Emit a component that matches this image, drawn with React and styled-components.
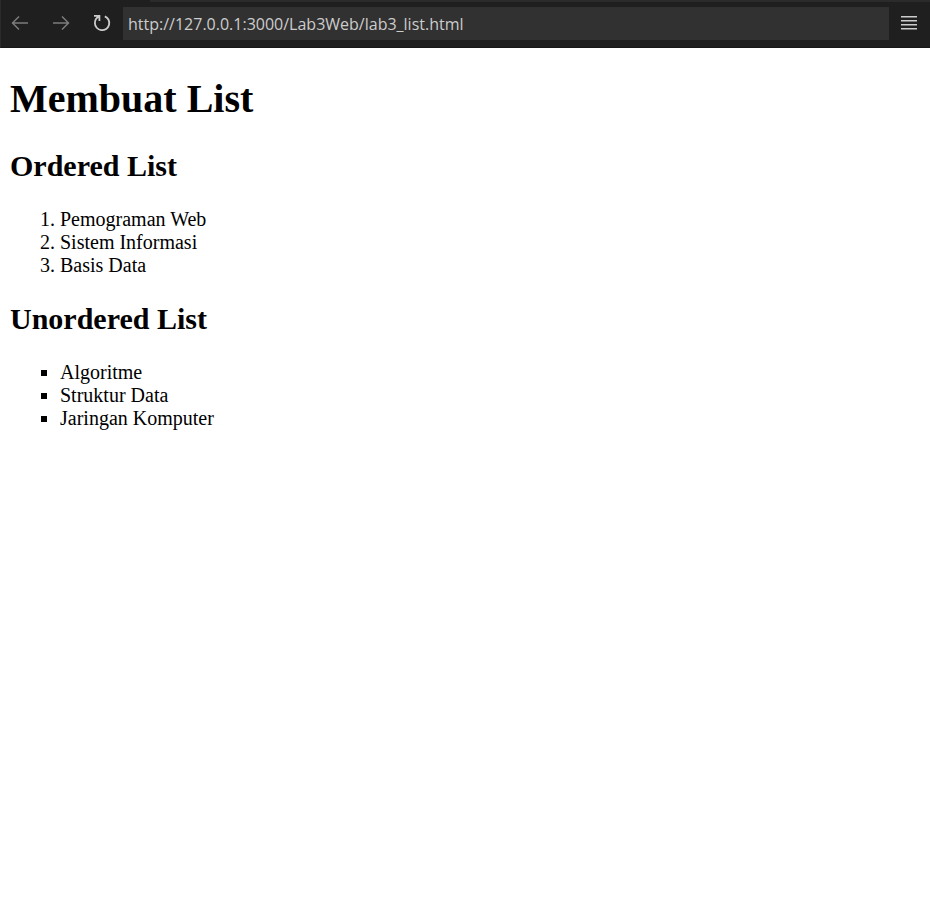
import React from "react";
import styled, { createGlobalStyle } from "styled-components";

const GlobalStyle = createGlobalStyle`
  *, *::before { box-sizing: border-box; }
  body {
    margin: 0;
    background: #fff;
    color: #000;
    font-family: "Liberation Serif", "Times New Roman", serif;
  }
`;

const Toolbar = styled.header`
  display: flex;
  align-items: center;
  height: 48px;
  padding: 0 1px 1px 0;
  background: linear-gradient(#2b2b2b, #2b2b2b) 149px 0 / 100% 2px no-repeat #1f1f1f;
  border-left: 1px solid #2b2b2b;
  border-bottom: 1px solid #181818;
`;

const IconButton = styled.button`
  display: flex;
  flex: none;
  align-items: center;
  justify-content: center;
  width: ${(p) => (p.$wide ? "40px" : "38px")};
  height: 33px;
  padding: 0;
  border: 0;
  background: transparent;
  color: ${(p) => (p.$dim ? "#7c7c7c" : "#cccccc")};
`;

const Navigation = styled.nav`
  display: flex;
  flex: none;
  gap: 3px;
  margin-right: 2px;
`;

const AddressInput = styled.input`
  flex: 1;
  min-width: 0;
  height: 33px;
  padding: 2px 5px 0;
  border: 0;
  outline: 0;
  background: #313131;
  color: #cccccc;
  font: 16px "Open Sans", sans-serif;
`;

const Page = styled.main`
  padding: 0 10px;
`;

const Title = styled.h1`
  margin: 28px 0 27px;
  font-size: 40px;
  line-height: 46px;
`;

const Subtitle = styled.h2`
  margin: 25px 0;
  font-size: 30px;
  line-height: 34px;
`;

const listStyles = `
  margin: 25px 0 24px;
  padding-left: 50px;
  font-size: 20px;
  line-height: 23px;
`;

const OrderedList = styled.ol`
  ${listStyles}
`;

const UnorderedList = styled.ul`
  ${listStyles}
  list-style-type: square;
`;

const ordered = ["Pemograman Web", "Sistem Informasi", "Basis Data"];
const unordered = ["Algoritme", "Struktur Data", "Jaringan Komputer"];

const BackIcon = () => (
  <svg width="18" height="16" viewBox="0 0 18 16" fill="none" stroke="currentColor" strokeWidth="1.5" aria-hidden="true">
    <path d="M17 8H1.5M8 1.5L1.5 8L8 14.5" />
  </svg>
);

const ForwardIcon = () => (
  <svg width="18" height="16" viewBox="0 0 18 16" fill="none" stroke="currentColor" strokeWidth="1.5" aria-hidden="true">
    <path d="M1 8H16.5M10 1.5L16.5 8L10 14.5" />
  </svg>
);

const ReloadIcon = () => (
  <svg width="18" height="18" viewBox="0 0 18 18" fill="none" stroke="currentColor" strokeWidth="1.8" aria-hidden="true">
    <path d="M1 1.9H6.4V7M6.2 2.4C3.4 3.6 1.9 6 1.9 9A7.2 7.2 0 1 0 11.8 2.3" />
  </svg>
);

const MenuIcon = () => (
  <svg width="16" height="14" viewBox="0 0 16 14" fill="currentColor" aria-hidden="true">
    <path d="M0 0h16v1.5H0zM0 4h16v1.5H0zM0 8h16v1.5H0zM0 12h16v1.5H0z" />
  </svg>
);

export default function App() {
  return (
    <>
      <GlobalStyle />
      <Toolbar>
        <Navigation aria-label="History">
          <IconButton $dim aria-label="Back"><BackIcon /></IconButton>
          <IconButton $dim aria-label="Forward"><ForwardIcon /></IconButton>
          <IconButton aria-label="Reload"><ReloadIcon /></IconButton>
        </Navigation>
        <AddressInput
          type="text"
          aria-label="Address"
          spellCheck={false}
          defaultValue="http://127.0.0.1:3000/Lab3Web/lab3_list.html"
        />
        <IconButton $wide aria-label="Menu"><MenuIcon /></IconButton>
      </Toolbar>
      <Page>
        <Title>Membuat List</Title>
        <Subtitle>Ordered List</Subtitle>
        <OrderedList>
          {ordered.map((item) => <li key={item}>{item}</li>)}
        </OrderedList>
        <Subtitle>Unordered List</Subtitle>
        <UnorderedList>
          {unordered.map((item) => <li key={item}>{item}</li>)}
        </UnorderedList>
      </Page>
    </>
  );
}
